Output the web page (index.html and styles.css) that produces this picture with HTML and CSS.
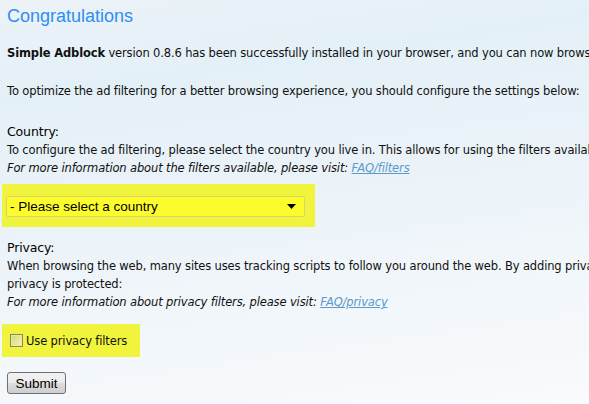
FILE: index.html
```html
<!DOCTYPE html>
<html>
<head>
<meta charset="utf-8">
<link rel="stylesheet" href="styles.css">
</head>
<body>
<div class="page">
  <h1 class="title">Congratulations</h1>
  <p class="intro"><b>Simple Adblock</b> version 0.8.6 has been successfully installed in your browser, and you can now browse the web without ads.</p>
  <p class="intro2">To optimize the ad filtering for a better browsing experience, you should configure the settings below:</p>

  <section class="section section-country">
    <h2 class="section-title">Country:</h2>
    <p class="text">To configure the ad filtering, please select the country you live in. This allows for using the filters available for your country.</p>
    <p class="text note">For more information about the filters available, please visit: <a href="#" class="link">FAQ/filters</a></p>
    <div class="highlight highlight-select">
      <div class="select">
        <span class="select-text">- Please select a country</span>
        <svg class="select-arrow" width="9" height="5" viewBox="0 0 9 5"><path d="M0 0h9L4.5 5z" fill="#000"/></svg>
      </div>
    </div>
  </section>

  <section class="section section-privacy">
    <h2 class="section-title">Privacy:</h2>
    <p class="text">When browsing the web, many sites uses tracking scripts to follow you around the web. By adding privacy filters, your<br>privacy is protected:</p>
    <p class="text note">For more information about privacy filters, please visit: <a href="#" class="link">FAQ/privacy</a></p>
    <label class="highlight highlight-check">
      <span class="checkbox"></span>
      <span class="check-label">Use privacy filters</span>
    </label>
  </section>

  <button class="submit">Submit</button>
</div>
</body>
</html>
```
FILE: styles.css
```css
html, body {
  margin: 0;
  padding: 0;
  height: 100%;
}
body {
  background: linear-gradient(172deg, #ecf3f8 0%, #e4f0f7 20%, #edf4f9 55%, #f9fbfd 100%);
  font-family: "DejaVu Sans", Tahoma, sans-serif;
  font-size: 11.5px;
  letter-spacing: -0.14px;
  line-height: 18px;
  color: #111;
  overflow: hidden;
}
.page {
  padding: 0 0 0 7px;
  width: 900px;
}
.title {
  margin: 0;
  padding-top: 5px;
  font-family: "Liberation Sans", Arial, sans-serif;
  font-weight: normal;
  font-size: 18px;
  letter-spacing: 0;
  line-height: 22px;
  color: #2f8ef2;
}
.intro,
.intro2,
.text {
  white-space: nowrap;
}
.intro {
  margin: 17px 0 0;
}
.intro2 {
  margin: 20px 0 0;
}
.section {
  margin: 0;
}
.section-country {
  margin-top: 22px;
}
.section-privacy {
  margin-top: 11px;
}
.section-title {
  margin: 0;
  font-size: 12.5px;
  font-weight: normal;
  line-height: 19px;
  color: #000;
}
.text {
  margin: 0;
}
.note {
  font-style: italic;
}
.link {
  color: #5b9acb;
  text-decoration: underline;
}
.highlight {
  background: #f0f43c;
  margin-left: -5px;
}
.highlight-select {
  margin-top: 7px;
  width: 313px;
  box-sizing: border-box;
  padding: 12px 0 10px 4px;
}
.select {
  width: 299px;
  height: 21px;
  box-sizing: border-box;
  border: 1px solid #d6d66a;
  border-radius: 2px;
  background: #fdfd2e;
  display: flex;
  align-items: center;
  justify-content: space-between;
  padding: 0 8px 0 3px;
  font-family: "Liberation Sans", Arial, sans-serif;
  font-size: 13.5px;
  letter-spacing: 0;
  color: #000;
}
.select-arrow {
  display: block;
}
.highlight-check {
  margin-top: 13px;
  width: 138px;
  height: 33px;
  box-sizing: border-box;
  padding: 0 0 0 8px;
  display: flex;
  align-items: center;
  gap: 3px;
}
.checkbox {
  width: 11px;
  height: 11px;
  border: 1px solid #8a8a60;
  background: linear-gradient(135deg, #d6d67e, #f4f4b0);
  box-shadow: inset 0 0 0 1px #e8e8a0;
}
.check-label {
  color: #111;
}
.submit {
  display: block;
  margin-top: 15px;
  width: 59px;
  height: 22px;
  padding: 0;
  border: 1px solid #707070;
  border-radius: 3px;
  background: linear-gradient(#f2f2f2 0%, #ebebeb 50%, #dddddd 51%, #cfcfcf 100%);
  font-family: "Liberation Sans", Arial, sans-serif;
  font-size: 13.5px;
  letter-spacing: 0;
  color: #000;
}
```
